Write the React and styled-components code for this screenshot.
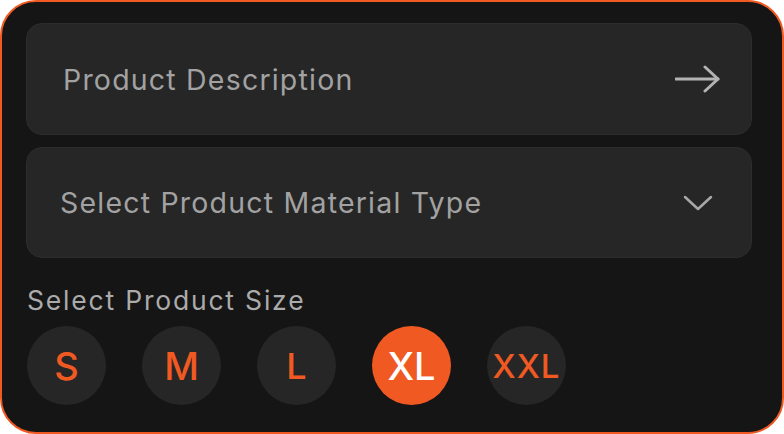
import React from "react";
import styled, { createGlobalStyle } from "styled-components";

const Global = createGlobalStyle`
  html, body { margin: 0; padding: 0; background: #ffffff; }
  body { font-family: "Inter", "Noto Sans", sans-serif; }
  * { box-sizing: border-box; }
`;

const Card = styled.div`
  width: 784px;
  height: 434px;
  border: 2px solid #f05a22;
  border-radius: 36px;
  background: #151515;
  padding: 21px 30px 0 24px;
  display: flex;
  flex-direction: column;
`;

const Field = styled.div`
  height: ${(p) => p.$h}px;
  background: #262626;
  border: 1px solid #2d2d2d;
  border-radius: 16px;
  display: flex;
  align-items: center;
  justify-content: space-between;
  padding: 0 ${(p) => p.$pr}px 0 ${(p) => p.$pl}px;
  margin-bottom: ${(p) => p.$mb || 0}px;
`;

const FieldText = styled.span`
  font-size: 28.5px;
  color: #a2a2a2;
  letter-spacing: 1.2px;
`;

const Label = styled.div`
  margin-top: 27px;
  margin-left: 1px;
  font-size: 26.5px;
  line-height: 30px;
  color: #ababab;
  letter-spacing: 1.8px;
`;

const Sizes = styled.div`
  display: flex;
  gap: 36px;
  margin-top: 11px;
  margin-left: 1px;
`;

const SizeButton = styled.div`
  width: 79px;
  height: 79px;
  border-radius: 50%;
  background: ${(p) => (p.$active ? "#f05a22" : "#262626")};
  color: ${(p) => (p.$active ? "#ffffff" : "#f05a22")};
  display: flex;
  align-items: center;
  justify-content: center;
  font-size: ${(p) => p.$fs}px;
  font-weight: 500;
  letter-spacing: ${(p) => p.$ls || 0}px;
`;

const sizes = [
  { t: "S", fs: 38 },
  { t: "M", fs: 38 },
  { t: "L", fs: 36 },
  { t: "XL", fs: 38, active: true },
  { t: "XXL", fs: 33, ls: 1 },
];

export default function App() {
  return (
    <>
      <Global />
      <Card>
        <Field $h={112} $pl={36} $pr={30} $mb={12}>
          <FieldText>Product Description</FieldText>
          <svg width="46" height="28" viewBox="0 0 46 28" fill="none">
            <path d="M1 14H43" stroke="#b3b3b3" strokeWidth="3" strokeLinecap="round" />
            <path d="M30 2L43 14L30 26" stroke="#b3b3b3" strokeWidth="3" strokeLinecap="round" strokeLinejoin="round" />
          </svg>
        </Field>
        <Field $h={111} $pl={33} $pr={38}>
          <FieldText>Select Product Material Type</FieldText>
          <svg width="30" height="16" viewBox="0 0 30 16" fill="none">
            <path d="M2 2L15 14L28 2" stroke="#a8a8a8" strokeWidth="2.5" strokeLinecap="round" strokeLinejoin="round" />
          </svg>
        </Field>
        <Label>Select Product Size</Label>
        <Sizes>
          {sizes.map((s) => (
            <SizeButton key={s.t} $active={s.active} $fs={s.fs} $ls={s.ls}>
              {s.t}
            </SizeButton>
          ))}
        </Sizes>
      </Card>
    </>
  );
}
